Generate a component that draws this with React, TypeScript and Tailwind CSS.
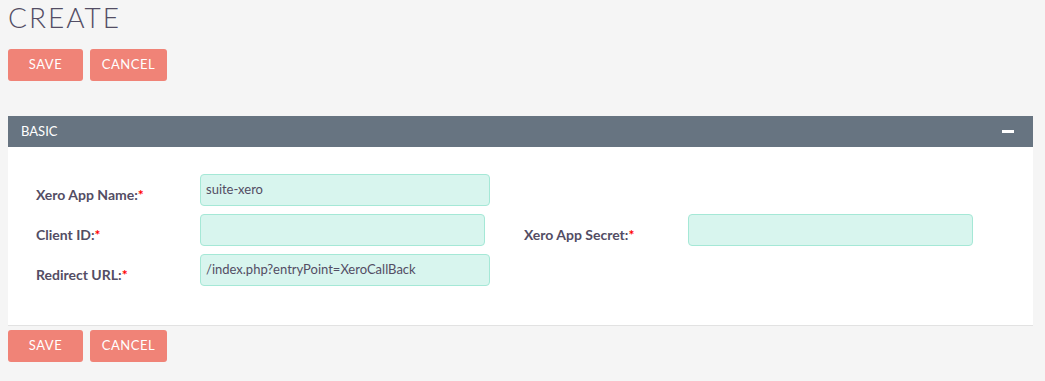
const Field = ({ label, value = "", wide = true }: { label: string; value?: string; wide?: boolean }) => {
    return (
        <div className="flex items-start">
            <div className="w-[164px] pt-[11px] text-[14px] leading-5 font-bold text-[#534d64]">
                {label}:<span className="text-[#ff0000]">*</span>
            </div>
            <div
                className={`${wide ? "w-[290px]" : "w-[285px]"} h-[32px] rounded-[4px] border border-[#a5e8d6] bg-[#d8f5ee] px-[5px] flex items-center text-[13px] text-[#534d64]`}
            >
                {value}
            </div>
        </div>
    );
};

const Buttons = () => {
    return (
        <div className="flex gap-[7px]">
            <button className="min-w-[75px] h-[32px] px-[10px] rounded-[3px] bg-[#f08377] text-white text-[13px] tracking-[0.5px]">
                SAVE
            </button>
            <button className="min-w-[77px] h-[32px] px-[10px] rounded-[3px] bg-[#f08377] text-white text-[13px] tracking-[0.5px]">
                CANCEL
            </button>
        </div>
    );
};

const App = () => {
    return (
        <div className="w-[1045px] h-[381px] bg-[#f5f5f5] pl-[8px] pr-[12px] font-['Lato',sans-serif] overflow-hidden">
            <h1 className="text-[28px] leading-[34px] font-light tracking-[2px] text-[#534d64]">CREATE</h1>
            <div className="mt-[15px]">
                <Buttons />
            </div>

            <div className="mt-[35px] bg-white border-b border-[#e2e2e2]">
                <div className="h-[31px] bg-[#677481] flex items-center justify-between pl-[13px] pr-[19px]">
                    <span className="text-white text-[13px]">BASIC</span>
                    <span className="w-[12px] h-[3px] bg-white"></span>
                </div>
                <div className="pt-[27px] pb-[39px] pl-[28px] flex flex-col gap-[8px]">
                    <Field label="Xero App Name" value="suite-xero" />
                    <div className="flex">
                        <div className="w-[488px]">
                            <Field label="Client ID" wide={false} />
                        </div>
                        <Field label="Xero App Secret" wide={false} />
                    </div>
                    <Field label="Redirect URL" value="/index.php?entryPoint=XeroCallBack" />
                </div>
            </div>

            <div className="mt-[4px]">
                <Buttons />
            </div>
        </div>
    );
};

export default App;
